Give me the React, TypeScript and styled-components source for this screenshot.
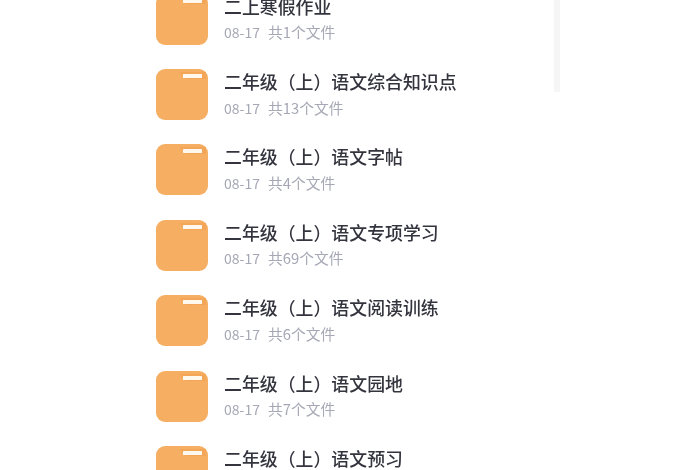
import { createGlobalStyle } from 'styled-components';
import styled from 'styled-components';

interface Folder {
  name: string;
  date: string;
  count: number;
}

const folders: Folder[] = [
  { name: '二上寒假作业', date: '08-17', count: 1 },
  { name: '二年级（上）语文综合知识点', date: '08-17', count: 13 },
  { name: '二年级（上）语文字帖', date: '08-17', count: 4 },
  { name: '二年级（上）语文专项学习', date: '08-17', count: 69 },
  { name: '二年级（上）语文阅读训练', date: '08-17', count: 6 },
  { name: '二年级（上）语文园地', date: '08-17', count: 7 },
  { name: '二年级（上）语文预习', date: '08-17', count: 3 },
];

const GlobalStyle = createGlobalStyle`
  html, body {
    margin: 0;
    padding: 0;
    background: #ffffff;
  }
`;

const Screen = styled.div`
  position: relative;
  width: 700px;
  height: 470px;
  overflow: hidden;
  background: #ffffff;
  font-family: 'Noto Sans CJK SC', 'Noto Sans', sans-serif;
`;

const List = styled.div`
  display: flex;
  flex-direction: column;
  gap: 24.4px;
  margin-top: -6.4px;
  padding-left: 156px;
  filter: blur(0.5px);
`;

const Row = styled.div`
  display: flex;
  align-items: flex-start;
  gap: 16px;
  height: 51px;
`;

const FolderIcon = styled.svg`
  flex: none;
  width: 52px;
  height: 51px;
`;

const Info = styled.div`
  display: flex;
  flex-direction: column;
  gap: 4.5px;
`;

const Title = styled.div`
  font-size: 17.9px;
  font-weight: 500;
  line-height: 24px;
  color: #33343d;
  white-space: nowrap;
`;

const Meta = styled.div`
  display: flex;
  align-items: baseline;
  gap: 8px;
  font-size: 14px;
  line-height: 19px;
  color: #a6a8b5;
  white-space: nowrap;
`;

const Count = styled.span`
  font-size: 14.8px;
`;

const ScrollThumb = styled.div`
  position: absolute;
  top: 0;
  left: 554px;
  width: 6px;
  height: 92px;
  background: #f6f6f6;
`;

function FolderGlyph() {
  return (
    <FolderIcon viewBox="0 0 52 51">
      <rect width="52" height="51" rx="9" fill="#f5ae62" />
      <path d="M23 3 H50 V10 H30 Z" fill="#f3a657" />
      <rect x="27" y="5" width="19" height="4" rx="0.5" fill="#fff8ee" />
    </FolderIcon>
  );
}

export default function App() {
  return (
    <Screen>
      <GlobalStyle />
      <List>
        {folders.map((folder) => (
          <Row key={folder.name}>
            <FolderGlyph />
            <Info>
              <Title>{folder.name}</Title>
              <Meta>
                <span>{folder.date}</span>
                <Count>共{folder.count}个文件</Count>
              </Meta>
            </Info>
          </Row>
        ))}
      </List>
      <ScrollThumb />
    </Screen>
  );
}
